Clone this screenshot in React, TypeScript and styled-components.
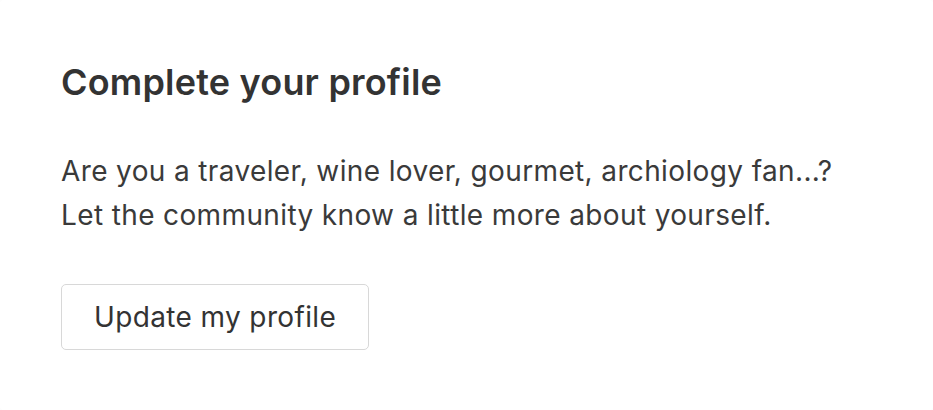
import React from "react";
import styled, { createGlobalStyle } from "styled-components";

const Global = createGlobalStyle`
  html, body { margin: 0; padding: 0; background: #fdfdfd; }
  body { font-family: Inter, "Noto Sans", Roboto, sans-serif; color: #333; }
`;

const Card = styled.section`
  box-sizing: border-box;
  width: 933px;
  height: 410px;
  background: #ffffff;
  border-radius: 4px;
  padding: 60px 61px;
  display: flex;
  flex-direction: column;
  align-items: flex-start;
`;

const Title = styled.h2`
  margin: 0;
  font-size: 36px;
  line-height: 44px;
  font-weight: 600;
  color: #333;
  letter-spacing: 0.2px;
`;

const Text = styled.p`
  margin: 45px 0 0;
  font-size: 28px;
  line-height: 44px;
  font-weight: 400;
  color: #3a3a3a;
  letter-spacing: 0.37px;
`;

const Button = styled.button`
  margin-top: 47px;
  box-sizing: border-box;
  height: 66px;
  padding: 0 32px;
  background: #fff;
  border: 1.5px solid #d8d8d8;
  border-radius: 5px;
  font-family: inherit;
  font-size: 28px;
  letter-spacing: 0.37px;
  color: #333;
  cursor: pointer;
`;

export default function App() {
  return (
    <>
      <Global />
      <Card>
        <Title>Complete your profile</Title>
        <Text>
          Are you a traveler, wine lover, gourmet, archiology fan...?
          <br />
          Let the community know a little more about yourself.
        </Text>
        <Button>Update my profile</Button>
      </Card>
    </>
  );
}
